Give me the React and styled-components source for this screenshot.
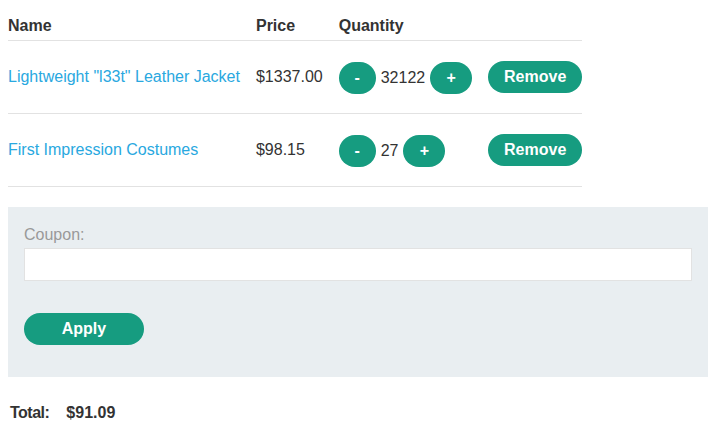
import React from 'react'
import styled, { createGlobalStyle } from 'styled-components'

const GlobalStyle = createGlobalStyle`
  body {
    margin: 8px;
    font-family: 'Liberation Sans', Arial, sans-serif;
    font-size: 16px;
    color: #333;
    background: #fff;
  }
`

const items = [
  { id: 1, name: 'Lightweight "l33t" Leather Jacket', price: '$1337.00', qty: 32122 },
  { id: 2, name: 'First Impression Costumes', price: '$98.15', qty: 27 },
]

const Table = styled.table`
  border-collapse: collapse;
  border-spacing: 0;

  th {
    text-align: left;
    font-weight: bold;
    height: 28px;
    padding: 4px 16px 0 0;
    border-bottom: 1px solid #e2e2e2;
    vertical-align: middle;
  }

  td {
    height: 72px;
    padding: 0 16px 0 0;
    border-bottom: 1px solid #e2e2e2;
    vertical-align: middle;
    white-space: nowrap;
  }

  th:last-child,
  td:last-child {
    padding-right: 0;
  }
`

const ItemLink = styled.a`
  color: #29a8e0;
  text-decoration: none;
`

const Qty = styled.div`
  display: flex;
  align-items: center;
  gap: 5px;
  padding-top: 1px;
`

const Button = styled.button`
  background: #169c80;
  color: #fff;
  border: none;
  border-radius: 16px;
  height: 32px;
  width: ${(p) => p.$w}px;
  padding: 0;
  font-family: 'Liberation Sans', Arial, sans-serif;
  font-size: 16px;
  font-weight: bold;
  cursor: pointer;
`

const Panel = styled.div`
  width: 700px;
  box-sizing: border-box;
  margin-top: 20px;
  background: #e9eef1;
  padding: 19px 16px 32px;
`

const Label = styled.label`
  display: block;
  color: #999;
  font-size: 16px;
  line-height: 18px;
  margin-bottom: 4px;
`

const Input = styled.input`
  display: block;
  width: 100%;
  box-sizing: border-box;
  height: 33px;
  border: 1px solid #e2e2e2;
  background: #fff;
  margin-bottom: 32px;
`

const Total = styled.div`
  display: flex;
  gap: 17px;
  margin-top: 27px;
  padding-left: 2px;
  font-weight: bold;
  font-size: 16px;
`

const TotalLabel = styled.span`
  letter-spacing: -0.5px;
`

const App = () => {
  return (
    <>
      <GlobalStyle />
      <Table>
        <thead>
          <tr>
            <th>Name</th>
            <th>Price</th>
            <th>Quantity</th>
            <th></th>
          </tr>
        </thead>
        <tbody>
          {items.map((item) => (
            <tr key={item.id}>
              <td>
                <ItemLink href='#'>{item.name}</ItemLink>
              </td>
              <td>{item.price}</td>
              <td>
                <Qty>
                  <Button $w={37}>-</Button>
                  <span>{item.qty}</span>
                  <Button $w={42}>+</Button>
                </Qty>
              </td>
              <td>
                <Button $w={94}>Remove</Button>
              </td>
            </tr>
          ))}
        </tbody>
      </Table>
      <Panel>
        <Label>Coupon:</Label>
        <Input type='text' />
        <Button $w={120}>Apply</Button>
      </Panel>
      <Total>
        <TotalLabel>Total:</TotalLabel>
        <span>$91.09</span>
      </Total>
    </>
  )
}

export default App
